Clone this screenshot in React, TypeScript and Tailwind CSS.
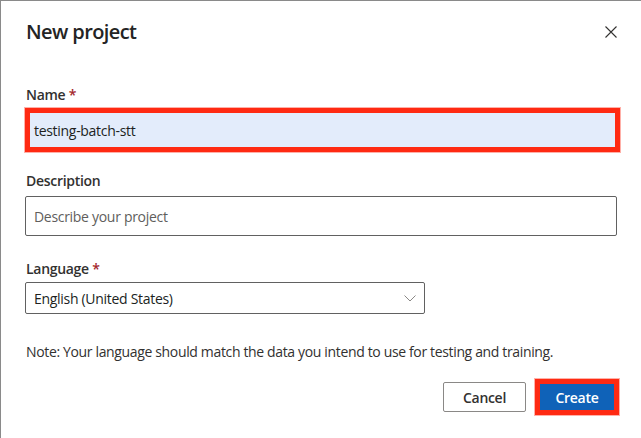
import React from "react";

const font = { fontFamily: '"Open Sans", "Noto Sans", "Liberation Sans", sans-serif' };

export default function App() {
  return (
    <div
      className="w-[641px] h-[438px] bg-white border-t border-l border-[#8a8a8a] overflow-hidden text-[#323130]"
      style={font}
    >
      <div className="pl-[24px] pr-[20px]">
        {/* Header */}
        <div className="flex items-center justify-between pt-[17px] h-[45px]">
          <h1 className="text-[20px] leading-[28px] font-semibold text-[#242424] tracking-[-0.6px] ml-[1px]">
            New project
          </h1>
          <button className="w-[12px] h-[12px] mr-[4px] flex items-center justify-center">
            <svg width="12" height="12" viewBox="0 0 12 12" fill="none">
              <path d="M0.5 0.5 L11.5 11.5 M11.5 0.5 L0.5 11.5" stroke="#323130" strokeWidth="1.1" />
            </svg>
          </button>
        </div>

        {/* Name */}
        <div className="mt-[39px] text-[14px] leading-[20px] font-semibold ml-[1px] tracking-[-0.3px]">
          Name <span className="text-[#a4262c]">*</span>
        </div>
        <div className="mt-[3px] w-[595px] h-[44px] border-[5px] border-[#ff2a12] bg-[#e3ecfb] flex items-center shadow-[0_0_0_1px_#ffb0a8]">
          <span className="pl-[4px] text-[14px] text-[#201f1e] tracking-[-0.3px]">testing-batch-stt</span>
        </div>

        {/* Description */}
        <div className="mt-[19px] text-[14px] leading-[20px] font-semibold ml-[1px] tracking-[-0.3px]">
          Description
        </div>
        <div className="mt-[5px] w-[592px] h-[40px] border border-[#616161] rounded-[2px] flex items-center">
          <span className="pl-[8px] text-[14px] text-[#605e5c] tracking-[-0.3px]">Describe your project</span>
        </div>

        {/* Language */}
        <div className="mt-[23px] text-[14px] leading-[20px] font-semibold ml-[1px] tracking-[-0.3px]">
          Language <span className="text-[#a4262c]">*</span>
        </div>
        <div className="mt-[3px] w-[400px] h-[32px] border border-[#616161] rounded-[2px] flex items-center justify-between">
          <span className="pl-[8px] text-[14px] text-[#201f1e] tracking-[-0.3px]">English (United States)</span>
          <svg width="12" height="7" viewBox="0 0 12 7" fill="none" className="mr-[8px]">
            <path d="M0.5 0.5 L6 6 L11.5 0.5" stroke="#8a8886" strokeWidth="1" />
          </svg>
        </div>

        {/* Note */}
        <div className="mt-[28px] text-[14px] leading-[20px] ml-[1px] tracking-[-0.35px]">
          Note: Your language should match the data you intend to use for testing and training.
        </div>

        {/* Buttons */}
        <div className="mt-[17px] flex items-center justify-end gap-[9px] w-[594px]">
          <button className="w-[83px] h-[30px] border border-[#8a8886] rounded-[2px] bg-white text-[14px] font-semibold text-[#323130] tracking-[-0.3px]">
            Cancel
          </button>
          <div className="w-[84px] h-[36px] border-[5px] border-[#ff2a12] bg-[#0f62b8] flex items-center justify-center shadow-[0_0_0_1px_#ffb0a8]">
            <span className="text-[14px] font-semibold text-white tracking-[-0.3px]">Create</span>
          </div>
        </div>
      </div>
    </div>
  );
}
